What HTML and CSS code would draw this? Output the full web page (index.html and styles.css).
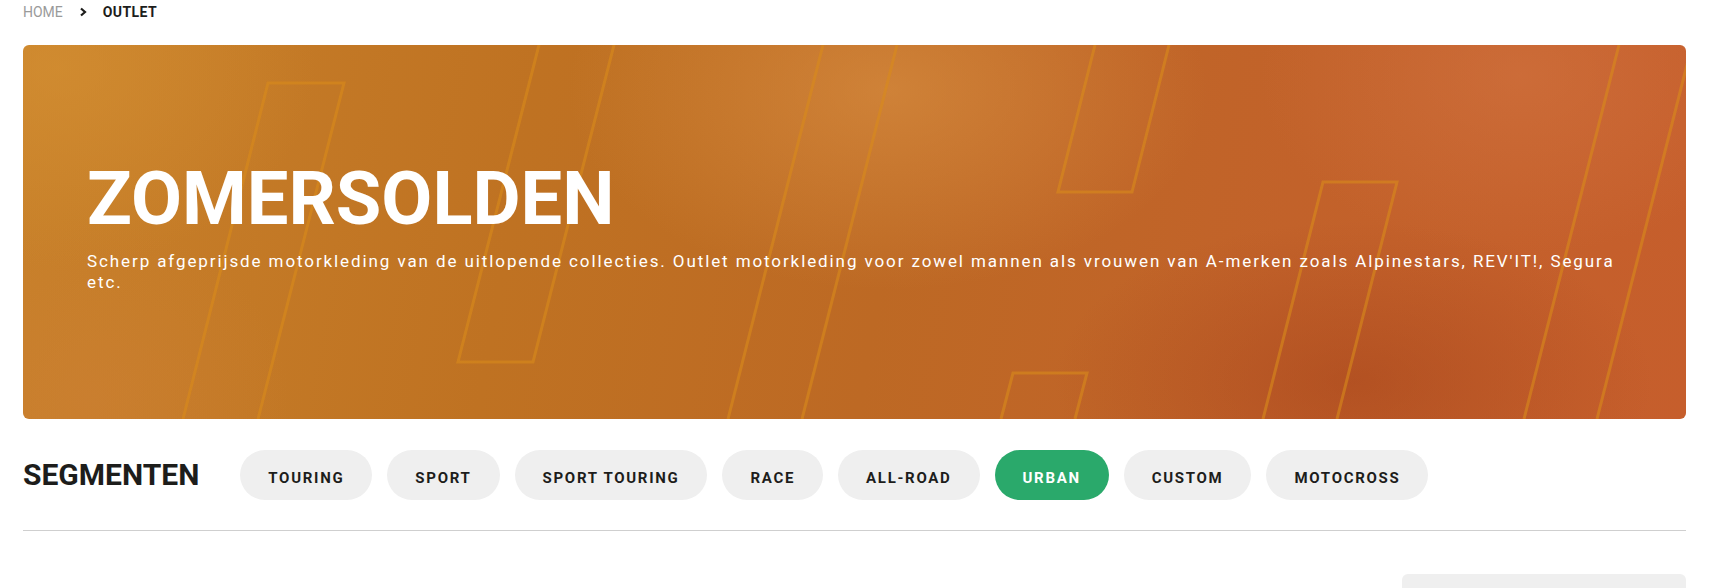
FILE: index.html
```html
<!DOCTYPE html>
<html lang="nl">
<head>
  <meta charset="UTF-8" />
  <meta name="viewport" content="width=device-width, initial-scale=1.0" />
  <title>Outlet</title>
  <link rel="stylesheet" href="styles.css">
</head>
<body>
  <div class="page">
    <nav class="crumbs">
      <a href="#" class="crumb-home">HOME</a>
      <svg class="crumb-sep" width="8" height="10" viewBox="0 0 8 10"><polyline points="2,1.5 6,5 2,8.5" fill="none" stroke="#1d1d1b" stroke-width="2.2"/></svg>
      <span class="crumb-current">OUTLET</span>
    </nav>

    <section class="hero">
      <!-- slanted outline stripes -->
      <svg class="hero-lines" viewBox="0 0 1663 374" preserveAspectRatio="none">
        <g fill="none" stroke="#d98a1a" stroke-width="3" stroke-opacity="0.6">
          <path d="M160 374 L245 38 L321 38 L235 374" />
          <path d="M516 0 L435 317 L510 317 L591 0" />
          <path d="M800 0 L705 374" />
          <path d="M874 0 L779 374" />
          <path d="M1072 0 L1035 147 L1109 147 L1146 0" />
          <path d="M1240 374 L1300 137 L1374 137 L1314 374" />
          <path d="M978 374 L990 328 L1064 328 L1052 374" />
          <path d="M1596 0 L1501 374" />
          <path d="M1669 0 L1574 374" />
        </g>
      </svg>
      <div class="hero-text">
        <h1>ZOMERSOLDEN</h1>
        <p>Scherp afgeprijsde motorkleding van de uitlopende collecties. Outlet motorkleding voor zowel mannen als vrouwen van A-merken zoals Alpinestars, REV'IT!, Segura etc.</p>
      </div>
    </section>

    <div class="segments">
      <h2>SEGMENTEN</h2>
      <ul class="pills">
        <li><a href="#" class="pill">TOURING</a></li>
        <li><a href="#" class="pill">SPORT</a></li>
        <li><a href="#" class="pill">SPORT TOURING</a></li>
        <li><a href="#" class="pill">RACE</a></li>
        <li><a href="#" class="pill">ALL-ROAD</a></li>
        <li><a href="#" class="pill active">URBAN</a></li>
        <li><a href="#" class="pill">CUSTOM</a></li>
        <li><a href="#" class="pill">MOTOCROSS</a></li>
      </ul>
    </div>

    <div class="toolbar">
      <div class="sort-box"></div>
    </div>
  </div>
</body>
</html>
```

FILE: styles.css
```css
body {
  margin: 0;
  font-family: Roboto, "Liberation Sans", sans-serif;
  color: #1d1d1b;
  background: #fff;
}
.page {
  padding: 0 25px 0 23px;
}

/* breadcrumb */
.crumbs {
  display: flex;
  align-items: center;
  height: 45px;
  box-sizing: border-box;
  padding-bottom: 22px;
  font-size: 14px;
  line-height: 20px;
}
.crumbs a {
  text-decoration: none;
}
.crumb-home {
  color: #9a9a9a;
}
.crumb-sep {
  margin: 0 16px 0 16px;
}
.crumb-current {
  font-weight: 700;
  letter-spacing: 0.4px;
}

/* banner */
.hero {
  position: relative;
  height: 374px;
  border-radius: 6px;
  overflow: hidden;
  background:
    radial-gradient(ellipse 320px 200px at 52% 12%, rgba(222, 150, 72, 0.55), transparent),
    radial-gradient(ellipse 300px 160px at 80% 90%, rgba(160, 62, 24, 0.45), transparent),
    radial-gradient(ellipse 260px 180px at 90% 8%, rgba(214, 122, 72, 0.45), transparent),
    radial-gradient(ellipse 260px 200px at 2% 6%, rgba(214, 146, 52, 0.6), transparent),
    radial-gradient(ellipse 200px 180px at 4% 95%, rgba(206, 128, 54, 0.5), transparent),
    linear-gradient(100deg, #c8812a 0%, #bf7222 30%, #bd6924 52%, #c2622a 75%, #c65e2c 100%);
}
.hero-lines {
  position: absolute;
  inset: 0;
  width: 100%;
  height: 100%;
}
.hero-text {
  position: relative;
  padding: 117px 64px 0 64px;
  color: #fff;
}
.hero h1 {
  margin: 0;
  font-size: 74px;
  line-height: 1;
  font-weight: 700;
}
.hero p {
  margin: 15px 0 0 0;
  font-size: 17px;
  line-height: 21px;
  letter-spacing: 1.9px;
}

/* segment filter */
.segments {
  display: flex;
  align-items: center;
  padding: 31px 0 30px 0;
  border-bottom: 1px solid #cfcfcf;
}
.segments h2 {
  margin: 0 41px 0 0;
  font-size: 30px;
  line-height: 1;
  font-weight: 700;
}
.pills {
  display: flex;
  gap: 15px;
  margin: 0;
  padding: 0;
  list-style: none;
}
.pill {
  display: flex;
  align-items: center;
  height: 50px;
  box-sizing: border-box;
  padding: 6px 28px 0 28px;
  border-radius: 25px;
  background: #efefef;
  color: #1d1d1b;
  text-decoration: none;
  font-size: 15px;
  font-weight: 700;
  letter-spacing: 1.7px;
}
.pill.active {
  background: #2aa96b;
  color: #fff;
}

/* sort box below the filter */
.toolbar {
  display: flex;
  justify-content: flex-end;
  padding-top: 43px;
}
.sort-box {
  width: 284px;
  height: 48px;
  border-radius: 6px;
  background: #efefef;
}
```
